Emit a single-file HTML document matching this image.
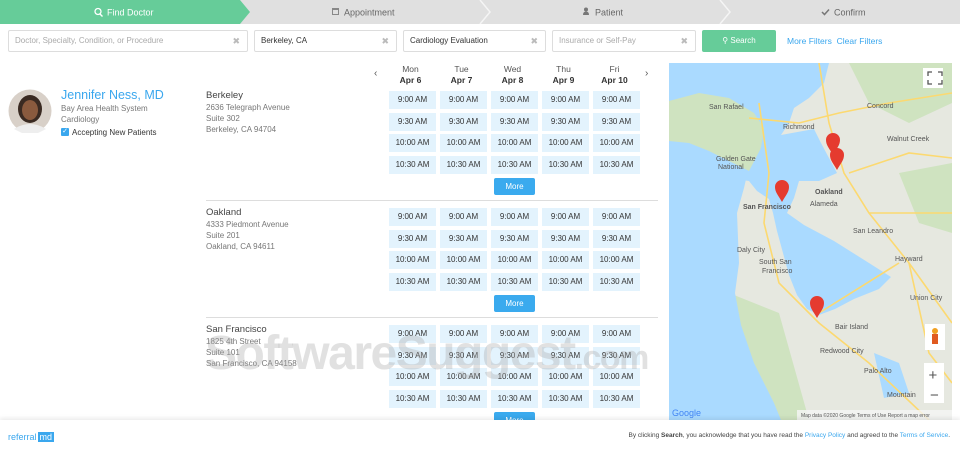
<!DOCTYPE html>
<html><head><meta charset="utf-8"><style>
*{margin:0;padding:0;box-sizing:border-box}
body{width:960px;height:452px;overflow:hidden;background:#fff;font-family:"Liberation Sans",sans-serif;position:relative;color:#444}
.abs{position:absolute}
.inp{position:absolute;top:30px;height:22px;border:1px solid #ddd;border-radius:2px;font-size:8px;line-height:20px;padding-left:6px;color:#333}
.inp .x{position:absolute;right:7px;top:0;color:#bbb;font-size:9px}
.ph{color:#aaa}
.slot{position:absolute;width:47px;height:18px;background:#e3f3fd;font-size:8px;line-height:18px;text-align:center;color:#333}
.more{position:absolute;left:494px;width:41px;height:17px;background:#3aaaee;border-radius:2px;color:#fff;font-size:8px;line-height:17px;text-align:center}
.day{position:absolute;top:64px;width:47px;text-align:center;font-size:8.5px;color:#555;line-height:11px}
.day b{color:#333;font-weight:bold}
.loc{position:absolute;left:206px;font-size:8px;color:#777;line-height:11px}
.loc .t{font-size:9.5px;color:#444;line-height:12px}
.hr{position:absolute;left:206px;width:452px;height:1px;background:#ddd}
.ml{font-family:"Liberation Sans",sans-serif;fill:#555;font-size:7px}
</style></head><body>
<svg class="abs" style="left:0;top:0" width="960" height="24">
<rect width="960" height="24" fill="#e0e0e0"/>
<polyline points="480,0 490,12 480,24" fill="none" stroke="#f5f5f5" stroke-width="1.5"/>
<polyline points="720,0 730,12 720,24" fill="none" stroke="#f5f5f5" stroke-width="1.5"/>
<polygon points="0,0 240,0 250,12 240,24 0,24" fill="#66cc99"/>
<circle cx="98" cy="11.5" r="3" fill="none" stroke="#fff" stroke-width="1.3"/><line x1="100" y1="14" x2="102.5" y2="16.5" stroke="#fff" stroke-width="1.4"/>
<text x="107" y="15.5" font-size="9" fill="#fff" font-family="Liberation Sans">Find Doctor</text>
<rect x="332" y="8" width="7" height="7" fill="#888"/><rect x="333" y="10" width="5" height="4" fill="#e0e0e0"/>
<text x="344" y="15.5" font-size="9" fill="#666" font-family="Liberation Sans">Appointment</text>
<circle cx="586" cy="9.5" r="2" fill="#777"/><path d="M583,15 Q583,11.5 586,11.5 Q589,11.5 589,15Z" fill="#777"/>
<text x="595" y="15.5" font-size="9" fill="#666" font-family="Liberation Sans">Patient</text>
<path d="M822,12 L824.5,14.5 L829,9.5" fill="none" stroke="#777" stroke-width="1.5"/>
<text x="834" y="15.5" font-size="9" fill="#666" font-family="Liberation Sans">Confirm</text>
</svg>

<div class="inp" style="left:8px;width:240px"><span class="ph">Doctor, Specialty, Condition, or Procedure</span><span class="x">✖</span></div>
<div class="inp" style="left:254px;width:143px">Berkeley, CA<span class="x">✖</span></div>
<div class="inp" style="left:403px;width:143px">Cardiology Evaluation<span class="x">✖</span></div>
<div class="inp" style="left:552px;width:144px"><span class="ph">Insurance or Self-Pay</span><span class="x">✖</span></div>
<div class="abs" style="left:702px;top:30px;width:74px;height:22px;background:#66cc99;border-radius:2px;color:#fff;font-size:8px;line-height:22px;text-align:center">&#9906; Search</div>
<div class="abs" style="left:787px;top:36px;font-size:8.5px;color:#3aa7ee">More Filters&nbsp; Clear Filters</div>

<svg class="abs" style="left:8px;top:89px" width="44" height="44"><circle cx="22" cy="22" r="21.5" fill="#d8d0c8"/><ellipse cx="22" cy="20" rx="12" ry="14" fill="#3a2a22"/><ellipse cx="22" cy="21" rx="8" ry="10" fill="#8a5a3e"/><path d="M6,40 Q22,30 38,40 L30,44 L14,44Z" fill="#eee"/></svg>
<div class="abs" style="left:61px;top:88px;font-size:12.5px;color:#3aa7ee">Jennifer Ness, MD</div>
<div class="abs" style="left:61px;top:103px;font-size:8px;color:#777;line-height:11px">Bay Area Health System<br>Cardiology</div>
<div class="abs" style="left:61px;top:128px;width:8px;height:8px;background:#3aa7ee;border-radius:1px;color:#fff;font-size:7px;line-height:8px;text-align:center">✓</div>
<div class="abs" style="left:72px;top:128px;font-size:8px;color:#333">Accepting New Patients</div>

<div class="abs" style="left:374px;top:68px;font-size:10px;color:#555">‹</div>
<div class="abs" style="left:645px;top:68px;font-size:10px;color:#555">›</div>
<div class="day" style="left:387px">Mon<br><b>Apr 6</b></div>
<div class="day" style="left:438px">Tue<br><b>Apr 7</b></div>
<div class="day" style="left:489px">Wed<br><b>Apr 8</b></div>
<div class="day" style="left:540px">Thu<br><b>Apr 9</b></div>
<div class="day" style="left:591px">Fri<br><b>Apr 10</b></div>

<div class="loc" style="top:90px"><div class="t">Berkeley</div>2636 Telegraph Avenue<br>Suite 302<br>Berkeley, CA 94704</div>
<div class="loc" style="top:207px"><div class="t">Oakland</div>4333 Piedmont Avenue<br>Suite 201<br>Oakland, CA 94611</div>
<div class="loc" style="top:324px"><div class="t">San Francisco</div>1825 4th Street<br>Suite 101<br>San Francisco, CA 94158</div>
<div class="hr" style="top:200px"></div>
<div class="hr" style="top:317px"></div>

<div id="slots"></div>
<script>
var xs=[389,440,491,542,593],ys=[0,21.5,43,64.5],t=["9:00 AM","9:30 AM","10:00 AM","10:30 AM"],h="";
[91,208,325].forEach(function(b){for(var r=0;r<4;r++)for(var c=0;c<5;c++)h+='<div class="slot" style="left:'+xs[c]+'px;top:'+(b+ys[r])+'px">'+t[r]+'</div>';h+='<div class="more" style="top:'+(b+87)+'px">More</div>';});
document.getElementById('slots').innerHTML=h;
</script>

<svg class="abs" style="left:669px;top:63px" width="283" height="357">
<rect width="283" height="357" fill="#e6e8e0"/>
<path d="M180,0 L283,0 L283,40 L240,60 L200,40Z M230,110 L283,100 L283,170 L250,160Z M60,230 L110,250 L140,357 L90,357 L70,300Z" fill="#cfe3c0"/>
<polygon points="0,0 160,0 155,20 140,35 125,45 120,60 112,72 145,66 152,80 160,95 168,110 150,118 130,118 125,135 118,150 135,162 165,178 200,200 222,214 210,226 185,236 166,246 150,252 138,246 128,232 120,212 114,190 108,168 104,150 100,136 88,128 80,118 60,115 0,110" fill="#aadaff"/>
<polygon points="0,38 30,30 60,35 85,50 95,65 92,85 80,108 60,98 40,88 20,80 0,78" fill="#cfe3c0"/>
<polygon points="0,110 78,112 75,125 68,150 70,200 66,230 72,262 85,300 105,340 112,357 0,357" fill="#aadaff"/>
<polygon points="205,290 230,300 240,330 215,335" fill="#aadaff"/>
<g fill="none" stroke="#fcd970" stroke-width="1.6">
<path d="M90,40 L100,110 L95,160 L110,220 L150,260 L200,300 L260,357"/>
<path d="M150,0 L160,60 L175,110 L200,150 L240,200 L283,260"/>
<path d="M80,55 L130,60 L170,50 L220,40 L283,30"/>
<path d="M150,250 L230,200"/><path d="M180,110 L240,90 L283,95"/>
<path d="M200,150 L283,150"/><path d="M240,200 L260,290 L283,320"/>
</g>
<text class="ml" x="40" y="46">San Rafael</text><text class="ml" x="114" y="66">Richmond</text>
<text class="ml" x="198" y="45">Concord</text><text class="ml" x="218" y="78">Walnut Creek</text>
<text class="ml" x="146" y="131" font-size="8.5" font-weight="bold" fill="#444">Oakland</text>
<text class="ml" x="74" y="146" font-size="8.5" font-weight="bold" fill="#444">San Francisco</text>
<text class="ml" x="141" y="143">Alameda</text><text class="ml" x="184" y="170">San Leandro</text>
<text class="ml" x="68" y="189">Daly City</text><text class="ml" x="90" y="201">South San</text><text class="ml" x="93" y="210">Francisco</text>
<text class="ml" x="226" y="198">Hayward</text><text class="ml" x="241" y="237">Union City</text>
<text class="ml" x="166" y="266">Bair Island</text><text class="ml" x="151" y="290">Redwood City</text>
<text class="ml" x="195" y="310">Palo Alto</text><text class="ml" x="218" y="334">Mountain</text>
<text class="ml" x="47" y="98" fill="#3a9a5a">Golden Gate</text><text class="ml" x="49" y="106" fill="#3a9a5a">National</text>
<path d="M164,92 C160,85 157,82 157,77 A7,7 0 1,1 171,77 C171,82 168,85 164,92Z" fill="#e53b2f"/>
<path d="M168,107 C164,100 161,97 161,92 A7,7 0 1,1 175,92 C175,97 172,100 168,107Z" fill="#e53b2f"/>
<path d="M113,139 C109,132 106,129 106,124 A7,7 0 1,1 120,124 C120,129 117,132 113,139Z" fill="#e53b2f"/>
<path d="M148,255 C144,248 141,245 141,240 A7,7 0 1,1 155,240 C155,245 152,248 148,255Z" fill="#e53b2f"/>
<rect x="254" y="5" width="20" height="20" fill="#fff"/><path d="M259,13 v-4 h4 M269,9 h4 v4 M273,17 v4 h-4 M263,21 h-4 v-4" fill="none" stroke="#555" stroke-width="1.3"/>
<rect x="256" y="261" width="20" height="26" fill="#fff"/><circle cx="266" cy="268" r="3" fill="#f0a020"/><rect x="263" y="271" width="6" height="10" fill="#e05a20"/>
<rect x="255" y="300" width="20" height="40" fill="#fff"/><text x="259.5" y="317" font-size="15" fill="#555">+</text><text x="261" y="337" font-size="15" fill="#555">−</text>
<text x="3" y="353" font-size="9" fill="#4285f4" font-family="Liberation Sans">Google</text>
<rect x="128" y="347" width="155" height="10" fill="#f5f5f5" opacity=".8"/>
<text x="132" y="354" font-size="5" fill="#555" font-family="Liberation Sans">Map data ©2020 Google   Terms of Use   Report a map error</text>
</svg>

<div class="abs" style="left:205px;top:326px;font-size:48px;font-weight:bold;color:rgba(170,170,170,.35);letter-spacing:-1.5px">SoftwareSuggest<span style="font-size:34px">.com</span></div>

<div class="abs" style="left:0;top:420px;width:960px;height:32px;background:#fff;box-shadow:0 -2px 4px rgba(0,0,0,.08)"></div>
<div class="abs" style="left:8px;top:432px;font-size:9px;color:#3aa7ee">referral<span style="background:#3aa7ee;color:#fff;padding:0 2px;margin-left:1px">md</span></div>
<div class="abs" style="right:10px;top:432px;font-size:6.5px;color:#444">By clicking <b>Search</b>, you acknowledge that you have read the <span style="color:#3aa7ee">Privacy Policy</span> and agreed to the <span style="color:#3aa7ee">Terms of Service</span>.</div>
</body></html>
